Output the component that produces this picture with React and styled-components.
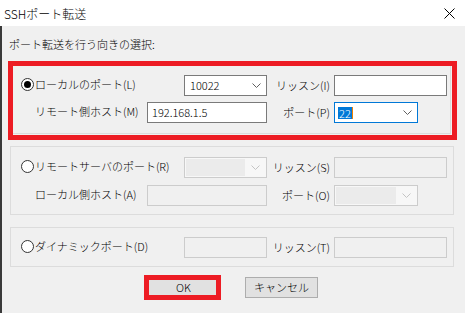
import React from "react";
import styled, { createGlobalStyle, css } from "styled-components";

const GlobalStyle = createGlobalStyle`
  html, body {
    margin: 0;
    padding: 0;
    background: #ffffff;
  }
  body {
    font-family: "Noto Sans CJK JP", "Noto Sans", sans-serif;
    font-size: 11px;
    font-weight: 300;
    color: #000;
  }
`;

const highlight = (l, t, r, b) => css`
  &::after {
    content: "";
    position: absolute;
    left: ${l}px;
    top: ${t}px;
    right: ${r}px;
    bottom: ${b}px;
    border: 5px solid #ed1c24;
    pointer-events: none;
  }
`;

const Window = styled.div`
  width: 465px;
  height: 313px;
  display: flex;
  flex-direction: column;
  background: #fff;
  overflow: hidden;
`;

const TitleBar = styled.div`
  flex: none;
  height: 26px;
  display: flex;
  align-items: center;
  justify-content: space-between;
  padding: 0 10px 0 4px;
  font-size: 12px;
`;

const Body = styled.div`
  flex: none;
  height: 284px;
  background: #f0f0f0;
  border-left: 2px solid #3a3a3a;
  border-bottom: 2px solid #555;
  padding: 10px 0 0 8px;
  display: flex;
  flex-direction: column;
  align-items: flex-start;
`;

const Intro = styled.div`
  line-height: 16px;
  margin-left: -1px;
  margin-bottom: 10px;
`;

const Group = styled.div`
  position: relative;
  box-sizing: border-box;
  width: ${(p) => p.$w}px;
  border: 1px solid #dcdcdc;
  padding: ${(p) => p.$pad};
  margin-bottom: 12px;
  display: flex;
  flex-direction: column;
  gap: ${(p) => p.$gap || 0}px;
  ${(p) => p.$marked && highlight(-3, -2, -7, -7)}
`;

const Row = styled.div`
  display: flex;
  align-items: center;
  height: 21px;
  padding-left: ${(p) => p.$indent}px;
`;

const LeftLabel = styled.label`
  display: flex;
  align-items: center;
  width: ${(p) => p.$w}px;
  flex: none;
  white-space: nowrap;
  margin-top: -3px;
`;

const RightLabel = styled.label`
  width: 63px;
  flex: none;
  margin-right: 4px;
  text-align: right;
  white-space: nowrap;
  margin-top: -2px;
`;

const Radio = styled.span`
  box-sizing: border-box;
  width: 13px;
  height: 13px;
  border-radius: 50%;
  border: 1px solid #333;
  background: #fff;
  display: inline-flex;
  align-items: center;
  justify-content: center;
  margin-right: 1px;
  flex: none;

  &::after {
    content: "";
    width: 7px;
    height: 7px;
    border-radius: 50%;
    background: ${(p) => (p.$checked ? "#000" : "transparent")};
  }
`;

const Field = styled.div`
  box-sizing: border-box;
  width: ${(p) => p.$w}px;
  height: 21px;
  flex: none;
  border: 1px solid ${(p) => (p.$disabled ? "#cccccc" : "#7a7a7a")};
  background: ${(p) => (p.$disabled ? "#f0f0f0" : "#fff")};
  padding: 0 4px;
  display: flex;
  align-items: center;
  line-height: 19px;
`;

const Combo = styled.div`
  box-sizing: border-box;
  width: ${(p) => p.$w}px;
  height: 21px;
  flex: none;
  border: 1px solid
    ${(p) => (p.$focus ? "#0078d7" : p.$disabled ? "#cccccc" : "#7a7a7a")};
  background: ${(p) => (p.$disabled ? "#f7f7f7" : "#fff")};
  padding: ${(p) => (p.$disabled ? "1px" : "0 0 0 5px")};
  display: flex;
  align-items: center;
  line-height: 19px;
`;

const ComboText = styled.span`
  flex: 1;
  align-self: stretch;
  display: flex;
  align-items: center;
  background: ${(p) => (p.$disabled ? "#ebebeb" : "transparent")};
`;

const Chevron = styled.span`
  width: 20px;
  flex: none;
  display: flex;
  align-items: center;
  justify-content: center;
  color: ${(p) => (p.$disabled ? "#c4c4c4" : "#606060")};
`;

const Selected = styled.span`
  background: #0078d7;
  color: #fff;
  line-height: 12px;
  padding: 0 1px;
  margin-left: -2px;
  border-right: 1px solid #f08000;
`;

const ButtonRow = styled.div`
  display: flex;
  gap: 25px;
  padding-left: 137px;
  margin-top: -2px;
`;

const Button = styled.button`
  position: relative;
  box-sizing: border-box;
  width: 73px;
  height: 21px;
  border: 1px solid #adadad;
  background: #e1e1e1;
  font: inherit;
  color: #000;
  padding: 0;
  line-height: 19px;
  ${(p) => p.$marked && highlight(-4, -3, -2, -3)}
`;

const Arrow = ({ disabled }) => (
  <Chevron $disabled={disabled}>
    <svg width="9" height="5" viewBox="0 0 9 5">
      <polyline
        points="0.5,0.5 4.5,4.5 8.5,0.5"
        fill="none"
        stroke="currentColor"
        strokeWidth="1"
      />
    </svg>
  </Chevron>
);

const Close = () => (
  <svg width="11" height="11" viewBox="0 0 11 11">
    <path d="M0.5 0.5 L10.5 10.5 M10.5 0.5 L0.5 10.5" stroke="#000" strokeWidth="1" />
  </svg>
);

export default function App() {
  return (
    <>
      <GlobalStyle />
      <Window>
        <TitleBar>
          <span>SSHポート転送</span>
          <Close />
        </TitleBar>
        <Body>
          <Intro>ポート転送を行う向きの選択:</Intro>

          <Group $w={441} $pad="12px 0 10px" $gap={6} $marked>
            <Row $indent={10}>
              <LeftLabel $w={163}>
                <Radio $checked />
                ローカルのポート(L)
              </LeftLabel>
              <Combo $w={83}>
                <ComboText>10022</ComboText>
                <Arrow />
              </Combo>
              <RightLabel>リッスン(I)</RightLabel>
              <Field $w={113} />
            </Row>
            <Row $indent={24}>
              <LeftLabel $w={112}>リモート側ホスト(M)</LeftLabel>
              <Field $w={120}>192.168.1.5</Field>
              <RightLabel>ポート(P)</RightLabel>
              <Combo $w={84} $focus>
                <ComboText>
                  <Selected>22</Selected>
                </ComboText>
                <Arrow />
              </Combo>
            </Row>
          </Group>

          <Group $w={444} $pad="10px 0 8px" $gap={7}>
            <Row $indent={10}>
              <LeftLabel $w={163}>
                <Radio />
                リモートサーバのポート(R)
              </LeftLabel>
              <Combo $w={83} $disabled>
                <ComboText $disabled />
                <Arrow disabled />
              </Combo>
              <RightLabel>リッスン(S)</RightLabel>
              <Field $w={113} $disabled />
            </Row>
            <Row $indent={24}>
              <LeftLabel $w={112}>ローカル側ホスト(A)</LeftLabel>
              <Field $w={120} $disabled />
              <RightLabel>ポート(O)</RightLabel>
              <Combo $w={84} $disabled>
                <ComboText $disabled />
                <Arrow disabled />
              </Combo>
            </Row>
          </Group>

          <Group $w={444} $pad="9px 0 8px">
            <Row $indent={10}>
              <LeftLabel $w={163}>
                <Radio />
                ダイナミックポート(D)
              </LeftLabel>
              <Field $w={83} $disabled />
              <RightLabel>リッスン(T)</RightLabel>
              <Field $w={113} $disabled />
            </Row>
          </Group>

          <ButtonRow>
            <Button $marked>OK</Button>
            <Button>キャンセル</Button>
          </ButtonRow>
        </Body>
      </Window>
    </>
  );
}
